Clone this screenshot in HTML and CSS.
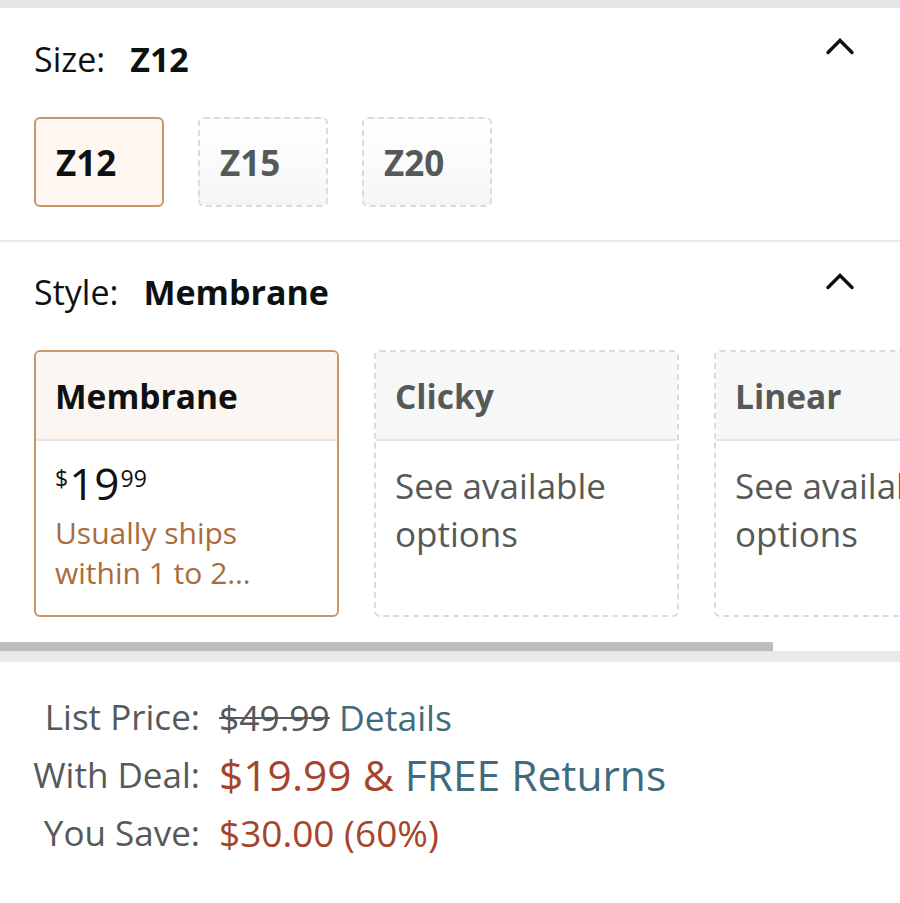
FILE: index.html
```html
<!DOCTYPE html>
<html>
<head>
<meta charset="utf-8">
<link rel="stylesheet" href="styles.css">
</head>
<body>
<div class="topbar"></div>

<section class="variation size-section">
  <div class="var-header">
    <div class="var-title"><span class="var-label">Size:</span><span class="var-value">Z12</span></div>
    <svg class="chevron" width="30" height="18" viewBox="0 0 30 18"><polyline points="3,15.5 15,3.5 27,15.5" fill="none" stroke="#0f1111" stroke-width="3.4" stroke-linejoin="miter" stroke-linecap="round"/></svg>
  </div>
  <div class="size-options">
    <div class="size-btn selected">Z12</div>
    <div class="size-btn">Z15</div>
    <div class="size-btn">Z20</div>
  </div>
</section>

<section class="variation style-section">
  <div class="var-header">
    <div class="var-title"><span class="var-label">Style:</span><span class="var-value">Membrane</span></div>
    <svg class="chevron" width="30" height="18" viewBox="0 0 30 18"><polyline points="3,15.5 15,3.5 27,15.5" fill="none" stroke="#0f1111" stroke-width="3.4" stroke-linejoin="miter" stroke-linecap="round"/></svg>
  </div>
  <div class="style-scroller">
    <div class="style-cards">
      <div class="style-card selected">
        <div class="card-head">Membrane</div>
        <div class="card-body">
          <div class="card-price"><span class="sym">$</span><span class="whole">19</span><span class="frac">99</span></div>
          <div class="card-ship">Usually ships<br>within 1 to 2…</div>
        </div>
      </div>
      <div class="style-card">
        <div class="card-head">Clicky</div>
        <div class="card-body">
          <div class="card-avail">See available options</div>
        </div>
      </div>
      <div class="style-card">
        <div class="card-head">Linear</div>
        <div class="card-body">
          <div class="card-avail">See available options</div>
        </div>
      </div>
    </div>
  </div>
  <div class="scrollbar"><div class="thumb"></div></div>
</section>
<div class="band"></div>

<section class="prices">
  <div class="price-label">List Price:</div>
  <div class="price-value list"><span class="strike">$49.99</span> <span class="link">Details</span></div>
  <div class="price-label">With Deal:</div>
  <div class="price-value deal"><span class="red">$19.99 &amp;</span> <span class="link">FREE Returns</span></div>
  <div class="price-label">You Save:</div>
  <div class="price-value save"><span class="red">$30.00 (60%)</span></div>
</section>
</body>
</html>
```

FILE: styles.css
```css
* { box-sizing: border-box; }
html, body { margin: 0; padding: 0; }
body {
  width: 900px;
  height: 903px;
  overflow: hidden;
  background: #fff;
  font-family: "Open Sans", "Noto Sans", "Liberation Sans", sans-serif;
  color: #0f1111;
}
.topbar { height: 8px; background: #e3e6e6; }

.variation { padding: 31px 0 0 34px; }
.size-section { padding-bottom: 33px; border-bottom: 2px solid #e9ebeb; }
.style-section { padding-top: 30px; }

.var-header {
  display: flex;
  justify-content: space-between;
  align-items: flex-start;
  padding-right: 45px;
}
.var-title { font-size: 34px; line-height: 40px; }
.var-label { color: #0f1111; margin-right: 25px; }
.var-value { font-weight: 700; }
.chevron { display: block; margin-top: -2px; }
.style-section .chevron { margin-top: 0; }

.size-options { display: flex; gap: 34px; margin-top: 38px; }
.size-btn {
  width: 130px;
  height: 90px;
  border: 2px dashed #d9dcdc;
  border-radius: 6px;
  background: linear-gradient(#ffffff, #f4f6f7);
  font-size: 35px;
  font-weight: 700;
  color: #565959;
  display: flex;
  align-items: center;
  padding-left: 20px;
}
.size-btn.selected {
  border: 2px solid #c6976a;
  background: #fff8f2;
  color: #0f1111;
}

.style-scroller { overflow: hidden; margin-top: 38px; padding-bottom: 25px; }
.style-cards { display: flex; gap: 35px; }
.style-card {
  flex: 0 0 305px;
  height: 267px;
  border: 2px dashed #d9dcdc;
  border-radius: 6px;
  background: #fff;
  display: flex;
  flex-direction: column;
  overflow: hidden;
}
.style-card.selected { border: 2px solid #c6976a; }
.card-head {
  height: 89px;
  flex: 0 0 89px;
  background: #f7f7f7;
  border-bottom: 2px solid #e3e6e6;
  display: flex;
  align-items: center;
  padding-left: 19px;
  font-size: 33.5px;
  font-weight: 700;
  color: #565959;
}
.style-card.selected .card-head { background: #fcf6f3; color: #0f1111; }
.card-body { padding: 18px 18px 0 19px; }
.card-price { display: flex; align-items: flex-start; color: #0f1111; line-height: 1; height: 54px; }
.card-price .sym { font-size: 23px; margin-top: 8px; margin-right: 1px; }
.card-price .whole { font-size: 44px; line-height: 48px; }
.card-price .frac { font-size: 23px; margin-top: 8px; margin-left: 1px; }
.card-ship { font-size: 30px; line-height: 40px; color: #ab6b3c; }
.card-avail { font-size: 35px; line-height: 48px; color: #565959; padding-top: 3px; }

.scrollbar { margin-left: -34px; height: 9px; }
.scrollbar .thumb { width: 773px; height: 9px; background: #bdbdbd; }
.band { height: 11px; background: #e8e9e9; }

.prices {
  display: grid;
  grid-template-columns: 200px auto;
  column-gap: 19px;
  justify-content: start;
  padding-top: 26px;
  font-size: 35px;
  line-height: 58px;
  color: #565959;
}
.price-label { text-align: right; white-space: nowrap; }
.price-value { white-space: nowrap; }
.list { font-size: 35.5px; }
.strike { text-decoration: line-through; text-decoration-thickness: 2px; }
.link { color: #3f6b7c; }
.red { color: #a6442b; }
.deal { font-size: 42.5px; }
.save { font-size: 37px; }
```
